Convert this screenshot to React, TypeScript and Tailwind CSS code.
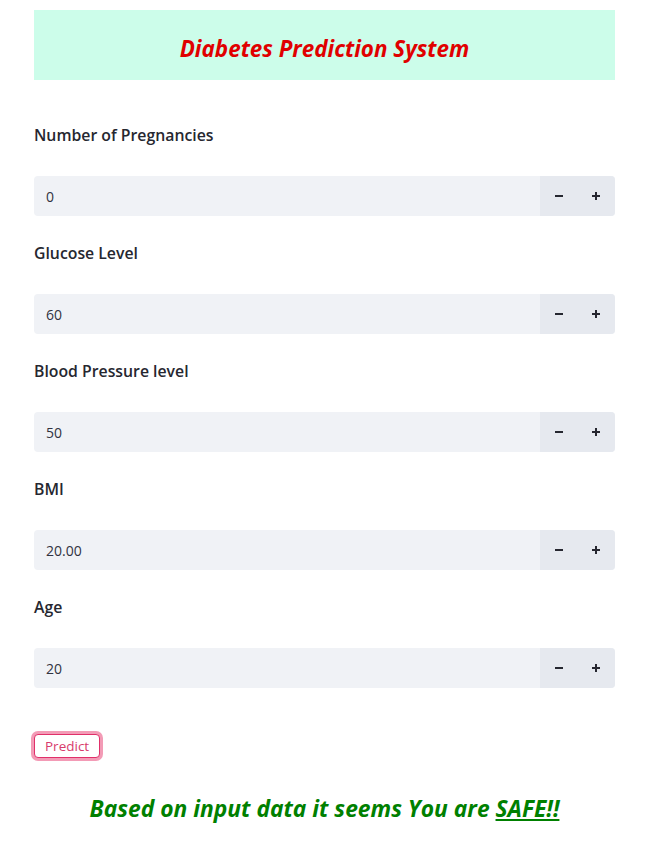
import React from 'react';

const fields = [
  { label: 'Number of Pregnancies', value: '0' },
  { label: 'Glucose Level', value: '60' },
  { label: 'Blood Pressure level', value: '50' },
  { label: 'BMI', value: '20.00' },
  { label: 'Age', value: '20' },
];

function NumberInput({ label, value, first }: { label: string; value: string; first: boolean }) {
  return (
    <div className={first ? 'pt-[43px]' : 'pt-[25px]'}>
      <div className="h-[24px] leading-[24px] text-[15.8px] font-semibold text-[#262730]">{label}</div>
      <div className="mt-[29px] flex h-[40px] rounded-[4px] bg-[#f0f2f6] overflow-hidden">
        <input
          readOnly
          value={value}
          className="flex-1 min-w-0 bg-transparent pl-[12px] text-[14px] text-[#31333f] outline-none"
        />
        <button className="w-[37px] flex items-center justify-center bg-[#e6e9ef]">
          <svg width="8" height="8" viewBox="0 0 8 8">
            <rect x="0" y="3" width="8" height="2" fill="#262730" />
          </svg>
        </button>
        <button className="w-[38px] flex items-center justify-center bg-[#e6e9ef]">
          <svg width="8" height="8" viewBox="0 0 8 8">
            <rect x="0" y="3" width="8" height="2" fill="#262730" />
            <rect x="3" y="0" width="2" height="8" fill="#262730" />
          </svg>
        </button>
      </div>
    </div>
  );
}

export default function App() {
  return (
    <div className="min-h-screen bg-white" style={{ fontFamily: '"Open Sans", sans-serif' }}>
      <div className="ml-[34px] w-[581px] pt-[10px]">
        <div className="h-[70px] bg-[#ccfdea] flex items-center justify-center pt-[7px]">
          <h1 className="text-[22.4px] font-bold italic text-[#e00000]">Diabetes Prediction System</h1>
        </div>

        {fields.map((f, i) => (
          <NumberInput key={f.label} label={f.label} value={f.value} first={i === 0} />
        ))}

        <div className="mt-[45px]">
          <button className="h-[24px] px-[10px] rounded-[4px] border border-[#e0306a] bg-white text-[13.5px] text-[#d83b6c] ring-[3px] ring-[#f39bb6]">
            Predict
          </button>
        </div>

        <div className="mt-[35px] h-[32px] leading-[32px] text-center text-[22.8px] font-bold italic text-[#008000]">
          Based on input data it seems You are <span className="underline">SAFE!!</span>
        </div>
      </div>
    </div>
  );
}
